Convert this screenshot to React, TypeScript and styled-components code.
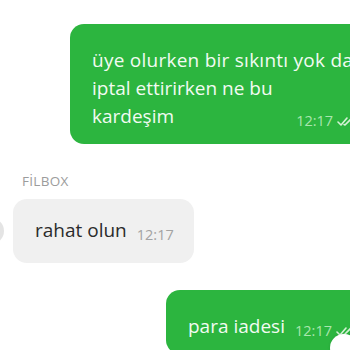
import React from "react";
import styled, { createGlobalStyle } from "styled-components";

const Global = createGlobalStyle`
  html, body { margin: 0; padding: 0; background: #ffffff; }
  body { font-family: "Open Sans", "Noto Sans", sans-serif; }
`;

const Viewport = styled.div`
  position: relative;
  width: 350px;
  height: 350px;
  overflow: hidden;
  background: #ffffff;
`;

const Column = styled.div`
  width: 370px;
  display: flex;
  flex-direction: column;
  padding-top: 24px;
`;

const OutRow = styled.div<{ $left: number; $top?: number }>`
  display: flex;
  padding-left: ${(p) => p.$left}px;
  margin-top: ${(p) => p.$top ?? 0}px;
`;

const OutBubble = styled.div`
  flex: 1;
  background: #2cb53f;
  color: #f2fbf2;
  border-radius: 14px;
  padding: 22px 18px 12px 22px;
  font-size: 19px;
  line-height: 28px;
  font-weight: 400;
`;

const WideLine = styled.div`
  letter-spacing: 0.25px;
  white-space: nowrap;
`;

const Sender = styled.div`
  margin: 28px 0 0 22px;
  font-size: 13.5px;
  color: #9c9c9c;
  letter-spacing: 0.3px;
  line-height: 18px;
`;

const InRow = styled.div`
  display: flex;
  align-items: center;
  margin-top: 9px;
`;

const Avatar = styled.div`
  width: 26px;
  height: 26px;
  border-radius: 50%;
  background: #e4e4e4;
  margin-left: -22px;
  margin-right: 9px;
  flex: none;
`;

const InBubble = styled.div`
  background: #f0f0f0;
  color: #2b2b2b;
  border-radius: 14px;
  padding: 17px 20px 17px 22px;
  font-size: 19px;
  line-height: 28px;
  display: flex;
  align-items: baseline;
  gap: 10px;
`;

const Line = styled.div`
  display: flex;
  align-items: baseline;
  justify-content: space-between;
`;

const Meta = styled.span<{ $light?: boolean }>`
  display: inline-flex;
  align-items: center;
  gap: 4px;
  font-size: 14.5px;
  color: ${(p) => (p.$light ? "#a9e6ae" : "#a3a3a3")};
  transform: translateY(3px);
  white-space: nowrap;
`;

const Checks = () => (
  <svg width="16" height="11" viewBox="0 0 16 11" fill="none" stroke="#d6f2d6" strokeWidth="1.6" strokeLinecap="round" strokeLinejoin="round">
    <path d="M1 6 L4 9 L10 2" />
    <path d="M7 8.5 L8 9 L15 2" />
  </svg>
);

const ScrollButton = styled.div`
  position: absolute;
  right: -8px;
  bottom: -12px;
  width: 28px;
  height: 28px;
  border-radius: 50%;
  background: #ffffff;
  box-shadow: 0 0 3px rgba(0, 0, 0, 0.12);
`;

export default function App() {
  return (
    <Viewport>
      <Global />
      <Column>
        <OutRow $left={70}>
          <OutBubble>
            <WideLine>üye olurken bir sıkıntı yok da</WideLine>
            <div>iptal ettirirken ne bu</div>
            <Line>
              <span>kardeşim</span>
              <Meta $light>
                12:17 <Checks />
              </Meta>
            </Line>
          </OutBubble>
        </OutRow>
        <Sender>FİLBOX</Sender>
        <InRow>
          <Avatar />
          <InBubble>
            <span>rahat olun</span>
            <Meta>12:17</Meta>
          </InBubble>
        </InRow>
        <OutRow $left={166} $top={27}>
          <OutBubble>
            <Line>
              <span>para iadesi</span>
              <Meta $light>
                12:17 <Checks />
              </Meta>
            </Line>
          </OutBubble>
        </OutRow>
      </Column>
      <ScrollButton />
    </Viewport>
  );
}
